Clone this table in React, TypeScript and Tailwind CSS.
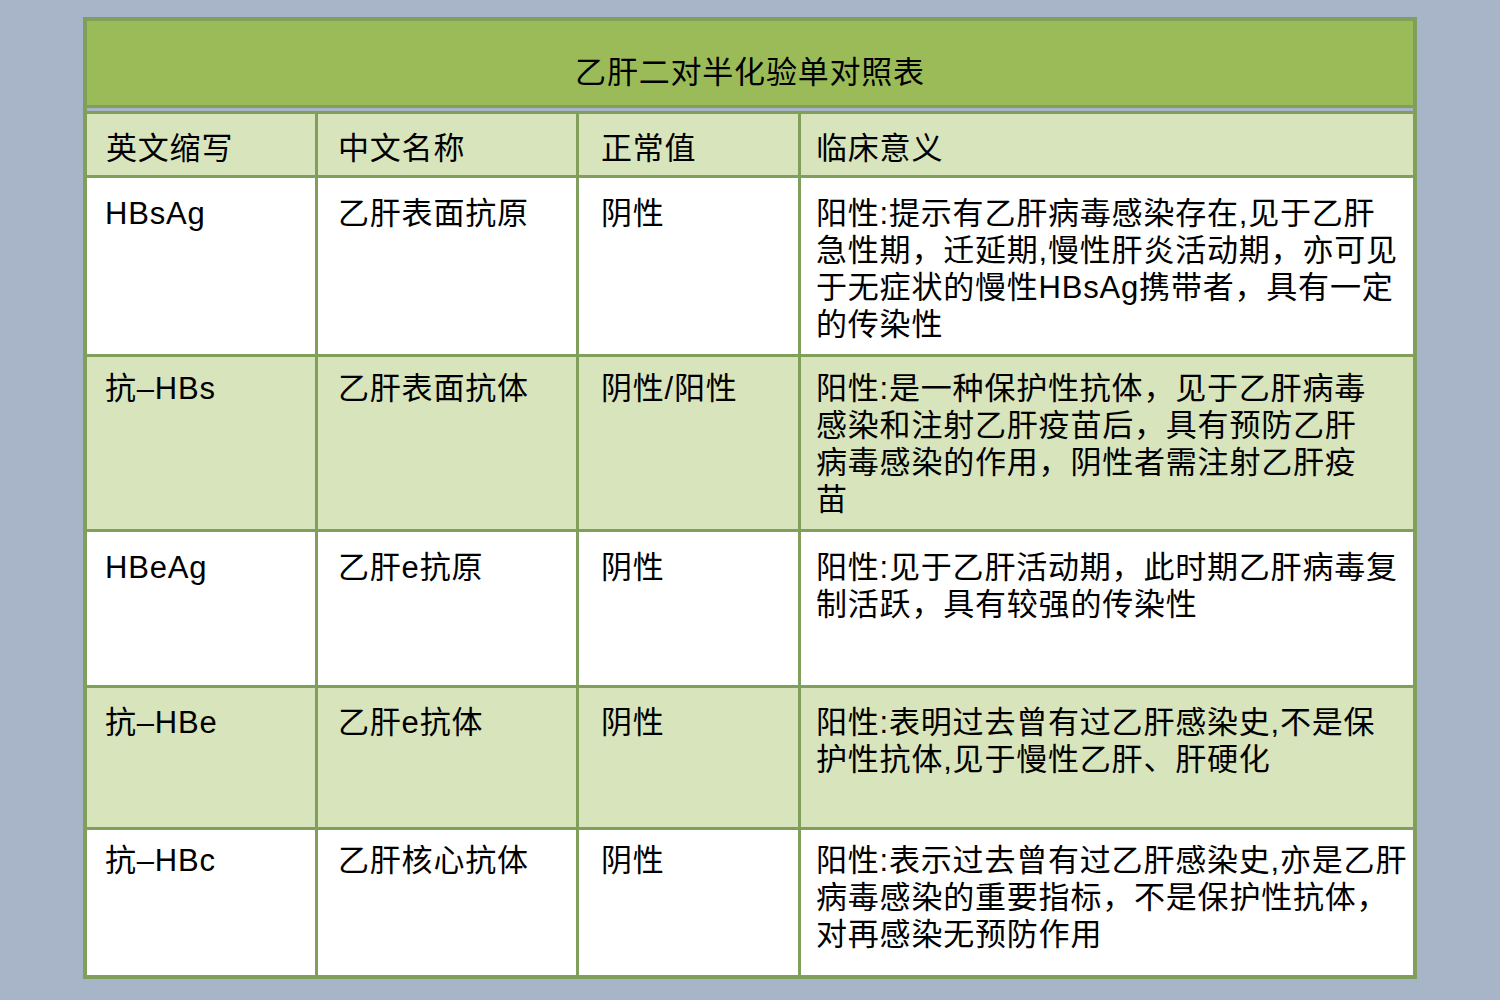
const rows = [
  {
    abbr: "HBsAg",
    name: "乙肝表面抗原",
    normal: "阴性",
    meaning: [
      "阳性:提示有乙肝病毒感染存在,见于乙肝",
      "急性期，迁延期,慢性肝炎活动期，亦可见",
      "于无症状的慢性HBsAg携带者，具有一定",
      "的传染性",
    ],
    bg: "bg-white",
    h: "h-[176px]",
    pt: "pt-[17px]",
  },
  {
    abbr: "抗–HBs",
    name: "乙肝表面抗体",
    normal: "阴性/阳性",
    meaning: [
      "阳性:是一种保护性抗体，见于乙肝病毒",
      "感染和注射乙肝疫苗后，具有预防乙肝",
      "病毒感染的作用，阴性者需注射乙肝疫",
      "苗",
    ],
    bg: "bg-[#d8e4bc]",
    h: "h-[172px]",
    pt: "pt-[13px]",
  },
  {
    abbr: "HBeAg",
    name: "乙肝e抗原",
    normal: "阴性",
    meaning: ["阳性:见于乙肝活动期，此时期乙肝病毒复", "制活跃，具有较强的传染性"],
    bg: "bg-white",
    h: "h-[153px]",
    pt: "pt-[17px]",
  },
  {
    abbr: "抗–HBe",
    name: "乙肝e抗体",
    normal: "阴性",
    meaning: ["阳性:表明过去曾有过乙肝感染史,不是保", "护性抗体,见于慢性乙肝、肝硬化"],
    bg: "bg-[#d8e4bc]",
    h: "h-[139px]",
    pt: "pt-[16px]",
  },
  {
    abbr: "抗–HBc",
    name: "乙肝核心抗体",
    normal: "阴性",
    meaning: [
      "阳性:表示过去曾有过乙肝感染史,亦是乙肝",
      "病毒感染的重要指标，不是保护性抗体，",
      "对再感染无预防作用",
    ],
    bg: "bg-white",
    h: "h-[145px]",
    pt: "pt-[12px]",
  },
];

const cols = "grid grid-cols-[228px_258px_219px_612px] gap-x-[3px]";

export default function App() {
  return (
    <div
      className="h-screen w-full bg-[#a8b5c8] pl-[83px] pt-[17px] text-[31px] leading-[37px] tracking-[0.8px] text-black"
      style={{ fontFamily: '"Liberation Sans", "Noto Sans CJK SC", sans-serif' }}
    >
      <div className="w-[1334px] border-4 border-[#7f9f5b] bg-[#7f9f5b]">
        {/* 标题 */}
        <div className="flex h-[84px] items-center justify-center bg-[#9bbb59] pt-[18px]">
          乙肝二对半化验单对照表
        </div>
        <div className="h-[9px] border-y-[3px] border-[#7f9f5b] bg-[#a8b5c8]" />

        {/* 表头 */}
        <div className={`${cols} h-[61px]`}>
          <div className="flex items-center bg-[#d8e4bc] pl-[19px] pt-[7px]">英文缩写</div>
          <div className="flex items-center bg-[#d8e4bc] pl-[20px] pt-[7px]">中文名称</div>
          <div className="flex items-center bg-[#d8e4bc] pl-[22px] pt-[7px]">正常值</div>
          <div className="flex items-center bg-[#d8e4bc] pl-[15px] pt-[7px]">临床意义</div>
        </div>

        {/* 数据行 */}
        {rows.map((r) => (
          <div key={r.abbr} className={`${cols} mt-[3px] ${r.h}`}>
            <div className={`${r.bg} ${r.pt} pl-[18px]`}>{r.abbr}</div>
            <div className={`${r.bg} ${r.pt} pl-[20px]`}>{r.name}</div>
            <div className={`${r.bg} ${r.pt} pl-[22px]`}>{r.normal}</div>
            <div className={`${r.bg} ${r.pt} pl-[15px]`}>
              {r.meaning.map((line) => (
                <div key={line} className="whitespace-nowrap">
                  {line}
                </div>
              ))}
            </div>
          </div>
        ))}
      </div>
    </div>
  );
}
